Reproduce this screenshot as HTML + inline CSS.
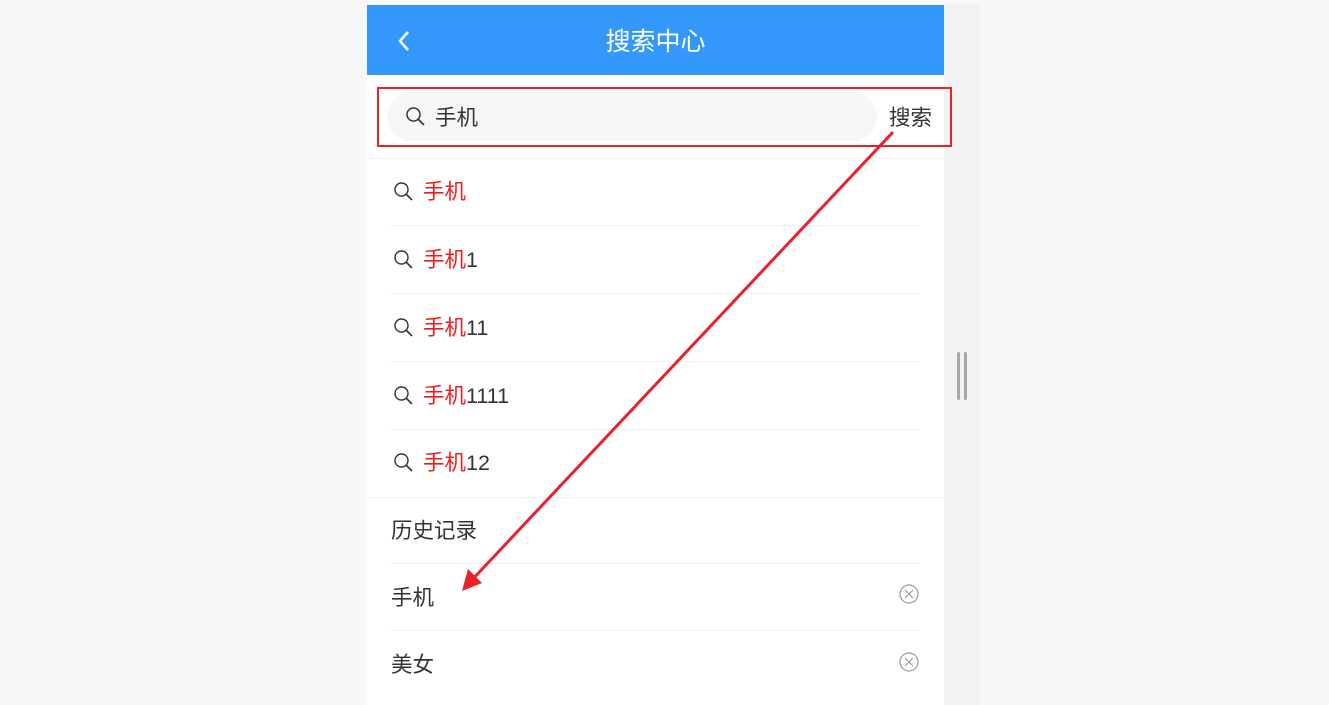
<!DOCTYPE html>
<html><head><meta charset="utf-8"><style>
body{margin:0;width:1329px;height:688px;background:#f8f8f8;position:relative;overflow:hidden;font-family:"Liberation Sans","Noto Sans CJK SC",sans-serif;color:#333}
.panel{position:absolute;left:367px;top:5px;width:577px;height:700px;background:#fff}
.strip{position:absolute;left:944px;top:5px;width:36px;height:700px;background:#f2f2f2}
.sb{position:absolute;top:347px;width:3px;height:48px;background:#a8a8a8;border-radius:2px}
.hdr{position:absolute;left:367px;top:5px;width:577px;height:70px;background:#3498fb;color:#fff;font-size:25px;text-align:center;line-height:74px}
.abs{position:absolute}
.row{position:absolute;left:391px;width:529px;height:68px;font-size:21.5px;line-height:70px}
.sep{position:absolute;height:1px;background:#f0f0f0}
.red{color:#f01c1c}
</style></head><body>
<div class="panel"></div>
<div class="strip"><div class="sb" style="left:13px"></div><div class="sb" style="left:20px"></div></div>
<div class="hdr">搜索中心</div>
<svg class="abs" style="left:396px;top:29px" width="16" height="24"><path d="M12 3 L4 12 L12 21" stroke="#fff" stroke-width="2.5" fill="none"/></svg>
<div class="abs" style="left:387px;top:92px;width:490px;height:49px;border-radius:25px;background:#f5f6f8"></div>
<svg class="abs" style="left:405px;top:106px" width="22" height="22"><circle cx="8.5" cy="8.5" r="6.5" stroke="#333" stroke-width="1.5" fill="none"/><path d="M13 13 L19 19" stroke="#333" stroke-width="1.6"/></svg>
<div class="abs" style="left:435px;top:102px;font-size:21.5px;line-height:32px">手机</div>
<div class="abs" style="left:889px;top:102px;font-size:21.5px;line-height:32px">搜索</div>
<div class="abs" style="left:377px;top:87px;width:571px;height:56px;border:2px solid #e8212b"></div>
<div class="sep" style="left:367px;top:158px;width:577px"></div>
<div class="row" style="top:157px"><span style="display:inline-block;width:32px"></span><span class="red">手机</span></div>
<div class="row" style="top:225px"><span style="display:inline-block;width:32px"></span><span class="red">手机</span>1</div>
<div class="row" style="top:293px"><span style="display:inline-block;width:32px"></span><span class="red">手机</span>11</div>
<div class="row" style="top:361px"><span style="display:inline-block;width:32px"></span><span class="red">手机</span>1111</div>
<div class="row" style="top:428px"><span style="display:inline-block;width:32px"></span><span class="red">手机</span>12</div>
<svg class="abs" style="left:393px;top:181px" width="24" height="300">
<g stroke="#333" fill="none"><g id="m"><circle cx="8.5" cy="8.5" r="6.5" stroke-width="1.4"/><path d="M13 13 L19 19" stroke-width="1.6"/></g>
<use href="#m" y="68"/><use href="#m" y="136"/><use href="#m" y="204"/><use href="#m" y="271"/></g></svg>
<div class="sep" style="left:391px;top:225px;width:529px"></div>
<div class="sep" style="left:391px;top:293px;width:529px"></div>
<div class="sep" style="left:391px;top:361px;width:529px"></div>
<div class="sep" style="left:391px;top:429px;width:529px"></div>
<div class="sep" style="left:367px;top:497px;width:577px"></div>
<div class="row" style="top:496px">历史记录</div>
<div class="sep" style="left:391px;top:563px;width:529px"></div>
<div class="row" style="top:563px">手机</div>
<div class="sep" style="left:391px;top:630px;width:529px"></div>
<div class="row" style="top:630px">美女</div>
<svg class="abs" style="left:898px;top:583px" width="22" height="100"><g stroke="#999" fill="none" stroke-width="1.2"><circle cx="11" cy="11" r="9"/><path d="M7 7 L15 15 M15 7 L7 15"/><circle cx="11" cy="79" r="9"/><path d="M7 75 L15 83 M15 75 L7 83"/></g></svg>
<svg class="abs" style="left:0;top:0" width="1329" height="688"><path d="M893 132 L470 582" stroke="#e8212b" stroke-width="3"/><path d="M462 591 L468 569 L482 583 Z" fill="#e8212b"/></svg>
</body></html>
